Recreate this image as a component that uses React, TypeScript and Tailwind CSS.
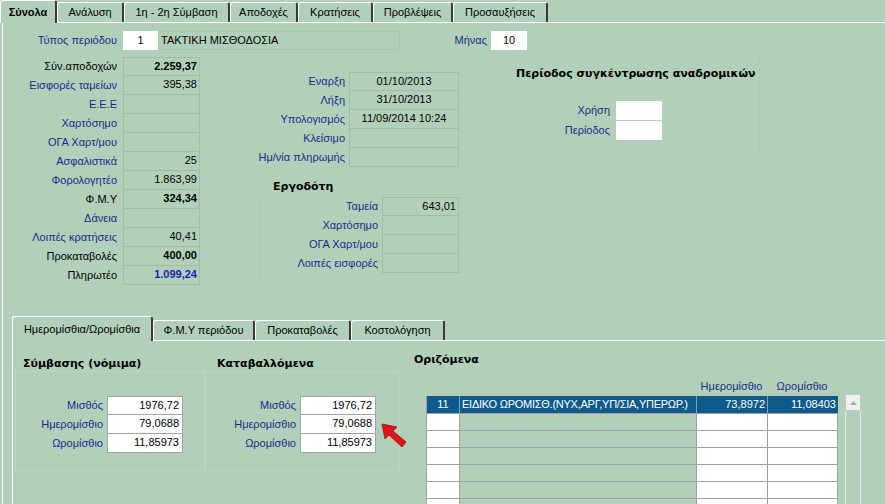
import React from "react";

// Greek payroll form: "Σύνολα" tab of a Delphi-style window

type TotalRow = { label: string; value?: string; dark?: boolean; strong?: boolean; blue?: boolean };

const totals: TotalRow[] = [
  { label: "Σύν.αποδοχών", value: "2.259,37", dark: true, strong: true },
  { label: "Εισφορές ταμείων", value: "395,38" },
  { label: "Ε.Ε.Ε" },
  { label: "Χαρτόσημο" },
  { label: "ΟΓΑ Χαρτ/μου" },
  { label: "Ασφαλιστικά", value: "25" },
  { label: "Φορολογητέο", value: "1.863,99" },
  { label: "Φ.Μ.Υ", value: "324,34", dark: true, strong: true },
  { label: "Δάνεια" },
  { label: "Λοιπές κρατήσεις", value: "40,41" },
  { label: "Προκαταβολές", value: "400,00", dark: true, strong: true },
  { label: "Πληρωτέο", value: "1.099,24", dark: true, strong: true, blue: true },
];

const dates = [
  { label: "Εναρξη", value: "01/10/2013" },
  { label: "Λήξη", value: "31/10/2013" },
  { label: "Υπολογισμός", value: "11/09/2014 10:24" },
  { label: "Κλείσιμο", value: "" },
  { label: "Ημ/νία πληρωμής", value: "" },
];

const employer = [
  { label: "Ταμεία", value: "643,01" },
  { label: "Χαρτόσημο", value: "" },
  { label: "ΟΓΑ Χαρτ/μου", value: "" },
  { label: "Λοιπές εισφορές", value: "" },
];

const topTabs = [
  { label: "Σύνολα", w: "w-[57px]", active: true },
  { label: "Ανάλυση", w: "w-[67px]", active: false },
  { label: "1η - 2η Σύμβαση", w: "w-[106px]", active: false },
  { label: "Αποδοχές", w: "w-[68px]", active: false },
  { label: "Κρατήσεις", w: "w-[75px]", active: false },
  { label: "Προβλέψεις", w: "w-[80px]", active: false },
  { label: "Προσαυξήσεις", w: "w-[95px]", active: false },
];

const bottomTabs = [
  { label: "Ημερομίσθια/Ωρομίσθια", w: "w-[141px]", active: true },
  { label: "Φ.Μ.Υ περιόδου", w: "w-[102px]", active: false },
  { label: "Προκαταβολές", w: "w-[96px]", active: false },
  { label: "Κοστολόγηση", w: "w-[94px]", active: false },
];

const wages = [
  { label: "Μισθός", value: "1976,72" },
  { label: "Ημερομίσθιο", value: "79,0688" },
  { label: "Ωρομίσθιο", value: "11,85973" },
];

const Tab = ({
  label,
  w,
  active,
  tall,
  boldActive,
}: {
  label: string;
  w: string;
  active: boolean;
  tall: string;
  boldActive: boolean;
}) => (
  <div
    className={`${w} ${active ? `${tall} -mb-px z-10` : "h-[20px]"} ${
      active && boldActive ? "font-bold" : ""
    } flex items-center justify-center whitespace-nowrap bg-[#b2d0b9] border-t border-l border-white border-r-2 border-r-[#3a3a3a] rounded-t-[3px] text-black`}
  >
    {label}
  </div>
);

const Heading = ({ children, className }: { children: React.ReactNode; className: string }) => (
  <div
    className={`font-['DejaVu_Sans',sans-serif] font-bold text-[11px] leading-[14px] whitespace-nowrap text-black ${className}`}
  >
    {children}
  </div>
);

const WageBox = ({ labelW }: { labelW: string }) => (
  <div className="flex flex-col">
    {wages.map((r, i) => (
      <div key={r.label} className="flex h-[19px]">
        <div className={`${labelW} text-right text-[#1c2b8c] leading-[18px]`}>{r.label}</div>
        <div
          className={`ml-[4px] w-[76px] bg-white border-x border-[#a3a3a3] ${
            i === 0 ? "border-t" : ""
          } border-b text-right pr-[3px] leading-[17px] text-black`}
        >
          {r.value}
        </div>
      </div>
    ))}
  </div>
);

export default function App() {
  return (
    <div className="w-[885px] h-[504px] overflow-hidden bg-[#b2d0b9] flex flex-col font-['Liberation_Sans',Arial,sans-serif] text-[11px] text-black relative">
      {/* top tab strip */}
      <div className="h-[23px] flex items-end border-b border-white shrink-0">
        {topTabs.map((t) => (
          <Tab key={t.label} {...t} tall="h-[23px]" boldActive />
        ))}
      </div>

      <div className="flex-1 flex flex-col ml-[2px] border-l border-white">
        {/* period type row */}
        <div className="flex h-[19px] mt-[8px]">
          <div className="w-[114px] text-right text-[#1c2b8c] leading-[19px]">Τύπος περιόδου</div>
          <div className="ml-[6px] w-[35px] bg-white text-center leading-[19px]">1</div>
          <div className="w-[242px] border border-[#a9c7b0] pl-[2px] leading-[17px]">ΤΑΚΤΙΚΗ ΜΙΣΘΟΔΟΣΙΑ</div>
          <div className="w-[87px] text-right text-[#1c2b8c] leading-[19px]">Μήνας</div>
          <div className="ml-[4px] w-[36px] bg-white text-center leading-[19px]">10</div>
        </div>

        {/* upper columns */}
        <div className="flex items-start mt-[7px] h-[259px] shrink-0">
          <div className="flex flex-col w-[197px]">
            {totals.map((r, i) => (
              <div key={r.label} className="flex h-[19px]">
                <div className={`w-[114px] text-right leading-[18px] ${r.dark ? "text-black" : "text-[#1c2b8c]"}`}>
                  {r.label}
                </div>
                <div
                  className={`ml-[6px] w-[77px] border-x border-b ${i === 0 ? "border-t" : ""} border-[#a2bca8] text-right pr-[2px] leading-[17px] ${
                    r.strong ? "font-bold" : ""
                  } ${r.blue ? "text-[#1d22b0]" : "text-black"}`}
                >
                  {r.value}
                </div>
              </div>
            ))}
          </div>

          <div className="flex flex-col ml-[50px] mt-[15px] w-[220px]">
            {dates.map((r, i) => (
              <div key={r.label} className="flex h-[19px]">
                <div className="w-[95px] text-right text-[#1c2b8c] leading-[18px]">{r.label}</div>
                <div
                  className={`ml-[4px] w-[110px] border-x border-b ${i === 0 ? "border-t" : ""} border-[#a2bca8] text-center leading-[17px]`}
                >
                  {r.value}
                </div>
              </div>
            ))}
            <Heading className="mt-[13px] pl-[23px]">Εργοδότη</Heading>
            <div className="ml-[10px] w-[210px] border border-[#aecbb5] pt-[2px] pb-[8px]">
              {employer.map((r, i) => (
                <div key={r.label} className="flex h-[19px]">
                  <div className="w-[117px] text-right text-[#1c2b8c] leading-[18px]">{r.label}</div>
                  <div
                    className={`ml-[4px] w-[77px] border-x border-b ${i === 0 ? "border-t" : ""} border-[#a2bca8] text-right pr-[2px] leading-[17px]`}
                  >
                    {r.value}
                  </div>
                </div>
              ))}
            </div>
          </div>

          <div className="ml-[35px] -mt-[2px] w-[255px] h-[100px] border border-[#aecbb5] flex flex-col">
            <Heading className="mt-[11px] pl-[10px]">Περίοδος συγκέντρωσης αναδρομικών</Heading>
            <div className="mt-[20px] flex flex-col gap-px">
              {["Χρήση", "Περίοδος"].map((l) => (
                <div key={l} className="flex h-[19px]">
                  <div className="w-[104px] text-right text-[#1c2b8c] leading-[19px]">{l}</div>
                  <div className="ml-[6px] w-[46px] bg-white" />
                </div>
              ))}
            </div>
          </div>
        </div>

        {/* lower tab control */}
        <div className="ml-[9px] h-[25px] flex items-end border-b border-white shrink-0">
          {bottomTabs.map((t) => (
            <Tab key={t.label} {...t} tall="h-[25px]" boldActive={false} />
          ))}
        </div>
        <div className="flex-1 ml-[9px] border-l border-white flex">
          <div className="ml-[2px] w-[190px] mt-[16px] flex flex-col">
            <Heading className="pl-[8px]">Σύμβασης (νόμιμα)</Heading>
            <div className="h-[100px] border border-[#b8d5bf] pt-[24px]">
              <WageBox labelW="w-[87px]" />
            </div>
          </div>

          <div className="w-[195px] mt-[16px] flex flex-col">
            <Heading className="pl-[12px]">Καταβαλλόμενα</Heading>
            <div className="h-[100px] border border-[#b8d5bf] pt-[24px]">
              <WageBox labelW="w-[90px]" />
            </div>
          </div>

          <div className="ml-[5px] flex-1 mt-[12px] flex flex-col">
            <Heading className="pl-[9px]">Οριζόμενα</Heading>
            <div className="flex mt-[12px]">
              <div className="flex flex-col pl-[21px]">
                <div className="grid grid-cols-[33px_237px_71px_70px] h-[16px] text-[#1c2b8c] leading-[14px]">
                  <div />
                  <div />
                  <div className="text-center">Ημερομίσθιο</div>
                  <div className="text-center">Ωρομίσθιο</div>
                </div>
                <div className="mt-[1px] border-l border-[#a0a0a0]">
                  <div className="grid grid-cols-[33px_237px_71px_70px] h-[17px] bg-[#0e5b8b] text-white leading-[17px]">
                    <div className="text-center border-r border-[#7ea3c0]">11</div>
                    <div className="pl-[2px] border-r border-[#7ea3c0] whitespace-nowrap overflow-hidden tracking-[-0.25px]">
                      ΕΙΔΙΚΟ ΩΡΟΜΙΣΘ.(ΝΥΧ,ΑΡΓ,ΥΠ/ΣΙΑ,ΥΠΕΡΩΡ.)
                    </div>
                    <div className="text-right pr-[2px] border-r border-[#7ea3c0]">73,8972</div>
                    <div className="text-right pr-[2px]">11,08403</div>
                  </div>
                  {[0, 1, 2, 3, 4, 5].map((i) => (
                    <div key={i} className="grid grid-cols-[33px_237px_71px_70px] h-[17px] border-t border-[#a0a0a0]">
                      <div className="bg-white border-r border-[#a0a0a0]" />
                      <div className="border-r border-[#a0a0a0]" />
                      <div className="bg-white border-r border-[#a0a0a0]" />
                      <div className="bg-white border-r border-[#a0a0a0]" />
                    </div>
                  ))}
                </div>
              </div>
              <div className="ml-[7px] mt-[15px] w-[16px] flex flex-col">
                <div className="h-[17px] bg-[#eef1ee] border border-[#c4c9c4] flex items-center justify-center">
                  <svg width="7" height="4" viewBox="0 0 7 4">
                    <path d="M0 4 L3.5 0 L7 4 Z" fill="#a8aca8" />
                  </svg>
                </div>
                <div className="h-[120px] border-x border-[#e2ece4]" />
              </div>
            </div>
          </div>
        </div>
      </div>

      {/* red pointer arrow */}
      <svg className="absolute left-[378px] top-[418px]" width="32" height="32" viewBox="0 0 32 32">
        <path d="M4 6 L19 9 L15 13 L28 24 L24 29 L11 17 L7 21 Z" fill="#e01414" stroke="#9a0c0c" strokeWidth="0.8" />
      </svg>
    </div>
  );
}
